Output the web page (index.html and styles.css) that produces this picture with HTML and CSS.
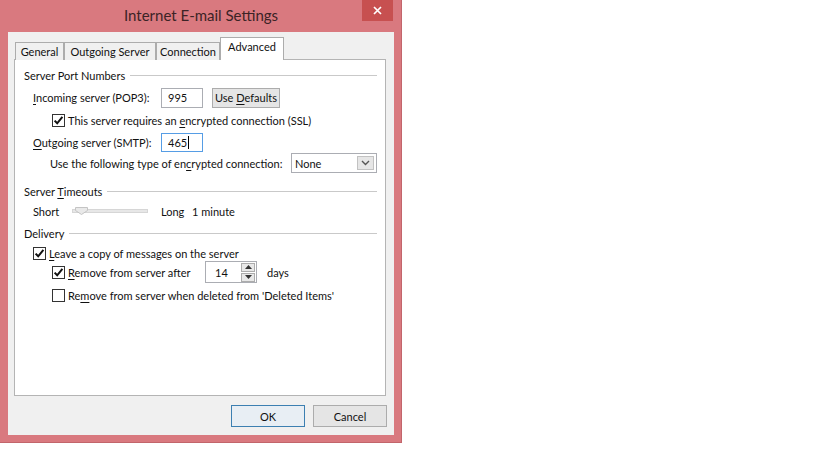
FILE: index.html
```html
<!DOCTYPE html>
<html lang="en">
<head>
	<meta charset="UTF-8">
	<title>Internet E-mail Settings</title>
	<link rel="stylesheet" href="styles.css">
</head>
<body>
	<div class="window">
		<div class="titlebar">
			<span class="title">Internet E-mail Settings</span>
			<div class="close">
				<svg width="9" height="9" viewBox="0 0 9 9"><path d="M1 1L8 8M8 1L1 8" stroke="#fff" stroke-width="1.7"/></svg>
			</div>
		</div>
		<div class="client">
			<div class="tabs">
				<div class="tab tabGeneral">General</div>
				<div class="tab tabOutgoing">Outgoing Server</div>
				<div class="tab tabConnection">Connection</div>
				<div class="tab tabAdvanced active">Advanced</div>
			</div>
			<div class="panel">
				<!-- Server port numbers -->
				<div class="group"><span>Server Port Numbers</span><i></i></div>
				<div class="row rowIncoming">
					<span class="label lblPort"><u>I</u>ncoming server (POP3):</span>
					<div class="field port">995</div>
					<div class="btn btnDefaults"><span>Use <u>D</u>efaults</span></div>
				</div>
				<div class="row rowCheck sub">
					<span class="check checked"><svg width="11" height="11" viewBox="0 0 11 11"><path d="M1.6 5.6L4.2 8.3L9.4 1.8" fill="none" stroke="#111" stroke-width="2"/></svg></span>
					<span class="checkText">This server requires an <u>e</u>ncrypted connection (SSL)</span>
				</div>
				<div class="row rowOutgoing">
					<span class="label lblPort"><u>O</u>utgoing server (SMTP):</span>
					<div class="field port focused">465<span class="caret"></span></div>
				</div>
				<div class="row rowEncrypt">
					<span class="label lblEncrypt">Use the following type of en<u>c</u>rypted connection:</span>
					<div class="field combo">
						<span>None</span>
						<span class="comboBtn"><svg width="9" height="6" viewBox="0 0 9 6"><path d="M1 1L4.5 4.5L8 1" fill="none" stroke="#555" stroke-width="1.4"/></svg></span>
					</div>
				</div>

				<!-- Timeouts -->
				<div class="group groupTimeouts"><span>Server <u>T</u>imeouts</span><i></i></div>
				<div class="row rowSlider">
					<span class="label lblShort">Short</span>
					<div class="slider">
						<svg class="thumb" width="13" height="8" viewBox="0 0 13 8"><path d="M0.5 0.5H12.5V3.5L6.5 7.5L0.5 3.5Z" fill="#e9e9e9" stroke="#c4c4c4"/></svg>
					</div>
					<span class="label lblLong">Long</span>
					<span>1 minute</span>
				</div>

				<!-- Delivery -->
				<div class="group groupDelivery"><span>Delivery</span><i></i></div>
				<div class="row rowCheck rowLeave">
					<span class="check checked"><svg width="11" height="11" viewBox="0 0 11 11"><path d="M1.6 5.6L4.2 8.3L9.4 1.8" fill="none" stroke="#111" stroke-width="2"/></svg></span>
					<span class="checkText"><u>L</u>eave a copy of messages on the server</span>
				</div>
				<div class="row rowAfter sub">
					<span class="check checked"><svg width="11" height="11" viewBox="0 0 11 11"><path d="M1.6 5.6L4.2 8.3L9.4 1.8" fill="none" stroke="#111" stroke-width="2"/></svg></span>
					<span class="checkText afterText"><u>R</u>emove from server after</span>
					<div class="field spin">
						<span>14</span>
						<span class="spinBtns">
							<span class="spinBtn"><svg width="7" height="4" viewBox="0 0 7 4"><path d="M0 4L3.5 0L7 4Z" fill="#333"/></svg></span>
							<span class="spinBtn"><svg width="7" height="4" viewBox="0 0 7 4"><path d="M0 0L3.5 4L7 0Z" fill="#333"/></svg></span>
						</span>
					</div>
					<span class="days">days</span>
				</div>
				<div class="row rowCheck rowDeleted sub">
					<span class="check"></span>
					<span class="checkText">Re<u>m</u>ove from server when deleted from 'Deleted Items'</span>
				</div>
			</div>
			<div class="buttons">
				<div class="btn btnDialog default">OK</div>
				<div class="btn btnDialog">Cancel</div>
			</div>
		</div>
	</div>
</body>
</html>
```

FILE: styles.css
```css
body{
	margin: 0;
	background-color: #fff;
	font-family: Lato, "Noto Sans", sans-serif;
	font-size: 11px;
	color: #111;
	white-space: nowrap;
}
u{
	text-decoration: underline;
	text-underline-offset: 2px;
}
.window{
	width: 402px;
	height: 443px;
	box-sizing: border-box;
	background-color: #d9797f;
	border-right: 1px solid #c2656b;
	border-bottom: 1px solid #c2656b;
	padding: 0 7px 7px 8px;
	display: flex;
	flex-direction: column;
}
.titlebar{
	height: 32px;
	position: relative;
	display: flex;
	justify-content: center;
	align-items: center;
}
.title{
	font-size: 15px;
	color: #3b2326;
	padding-bottom: 3px;
}
.close{
	position: absolute;
	top: 0;
	right: 1px;
	width: 31px;
	height: 21px;
	background-color: #c75050;
	display: flex;
	justify-content: center;
	align-items: center;
}
.client{
	flex: 1;
	background-color: #f0f0f0;
	padding: 6px 7px 8px 6px;
	display: flex;
	flex-direction: column;
}
.tabs{
	height: 21px;
	display: flex;
	align-items: flex-end;
	padding-left: 1px;
	position: relative;
	z-index: 1;
}
.tab{
	height: 18px;
	box-sizing: border-box;
	border: 1px solid #acacac;
	border-bottom: none;
	background-color: #f0f0f0;
	display: flex;
	justify-content: center;
	align-items: center;
	margin-bottom: -1px;
	padding-bottom: 1px;
}
.tabGeneral{ width: 49px; }
.tabOutgoing{ width: 92px; }
.tabConnection{ width: 64px; }
.tabAdvanced{ width: 64px; }
.tab.active{
	height: 23px;
	background-color: #fff;
	padding-bottom: 5px;
}
.panel{
	flex: 1;
	margin-right: 1px;
	background-color: #fff;
	border: 1px solid #b4b4b4;
	padding: 7px 8px 0 9px;
}
.group{
	height: 16px;
	display: flex;
	align-items: center;
}
.group i{
	flex: 1;
	margin-left: 5px;
	border-top: 1px solid #c9c9c9;
}
.groupTimeouts{ margin-top: 10px; }
.groupDelivery{ margin-top: 6px; }
.row{
	display: flex;
	align-items: center;
	padding-left: 9px;
}
.row.sub{ padding-left: 28px; }
.rowIncoming{ margin-top: 4px; height: 21px; }
.rowCheck{ height: 16px; margin-top: 4px; }
.rowAfter{ height: 22px; margin-top: 0; }
.rowOutgoing{ margin-top: 4px; height: 20px; }
.rowEncrypt{ margin-top: 1px; height: 20px; padding-left: 26px; }
.rowSlider{ margin-top: 4px; height: 16px; }
.label{ flex: none; }
.lblPort{ width: 128px; }
.lblEncrypt{ width: 241px; }
.lblShort{ width: 39px; }
.lblLong{ width: 31px; }
.field{
	box-sizing: border-box;
	border: 1px solid #abadb3;
	background-color: #fff;
	display: flex;
	align-items: center;
}
.port{
	width: 42px;
	height: 20px;
	padding-left: 6px;
}
.rowOutgoing .port{ height: 19px; }
.focused{ border-color: #569de5; }
.caret{
	width: 1px;
	height: 13px;
	background-color: #000;
	margin-left: 1px;
}
.btn{
	box-sizing: border-box;
	border: 1px solid #acacac;
	background-color: #e5e5e5;
	display: flex;
	justify-content: center;
	align-items: center;
}
.btnDefaults{
	width: 68px;
	height: 20px;
	margin-left: 9px;
}
.check{
	flex: none;
	width: 13px;
	height: 13px;
	box-sizing: border-box;
	border: 1px solid #333;
	background-color: #fff;
	display: flex;
	justify-content: center;
	align-items: center;
}
.checkText{ margin-left: 3px; }
.afterText{ width: 137px; flex: none; }
.combo{
	width: 90px;
	height: 20px;
	padding: 0 2px 0 3px;
	justify-content: space-between;
}
.comboBtn{
	width: 17px;
	height: 14px;
	box-sizing: border-box;
	border: 1px solid #c2c2c2;
	background-color: #e6e6e6;
	display: flex;
	justify-content: center;
	align-items: center;
}
.slider{
	flex: none;
	width: 76px;
	height: 4px;
	box-sizing: border-box;
	border: 1px solid #d6d6d6;
	background-color: #e7e7e7;
	position: relative;
	margin-right: 13px;
}
.thumb{
	position: absolute;
	left: 2px;
	top: -3px;
}
.spin{
	flex: none;
	width: 52px;
	height: 22px;
	padding: 0 1px 0 9px;
	justify-content: space-between;
}
.spinBtns{
	display: flex;
	flex-direction: column;
	gap: 1px;
}
.spinBtn{
	width: 14px;
	height: 9px;
	box-sizing: border-box;
	border: 1px solid #acacac;
	background-color: #e8e8e8;
	display: flex;
	justify-content: center;
	align-items: center;
}
.days{ margin-left: 10px; }
.buttons{
	margin-top: 9px;
	display: flex;
	justify-content: flex-end;
	gap: 8px;
}
.btnDialog{
	width: 74px;
	height: 22px;
}
.btn.default{
	border-color: #3c7fb1;
	background-color: #e8eef4;
}
```
